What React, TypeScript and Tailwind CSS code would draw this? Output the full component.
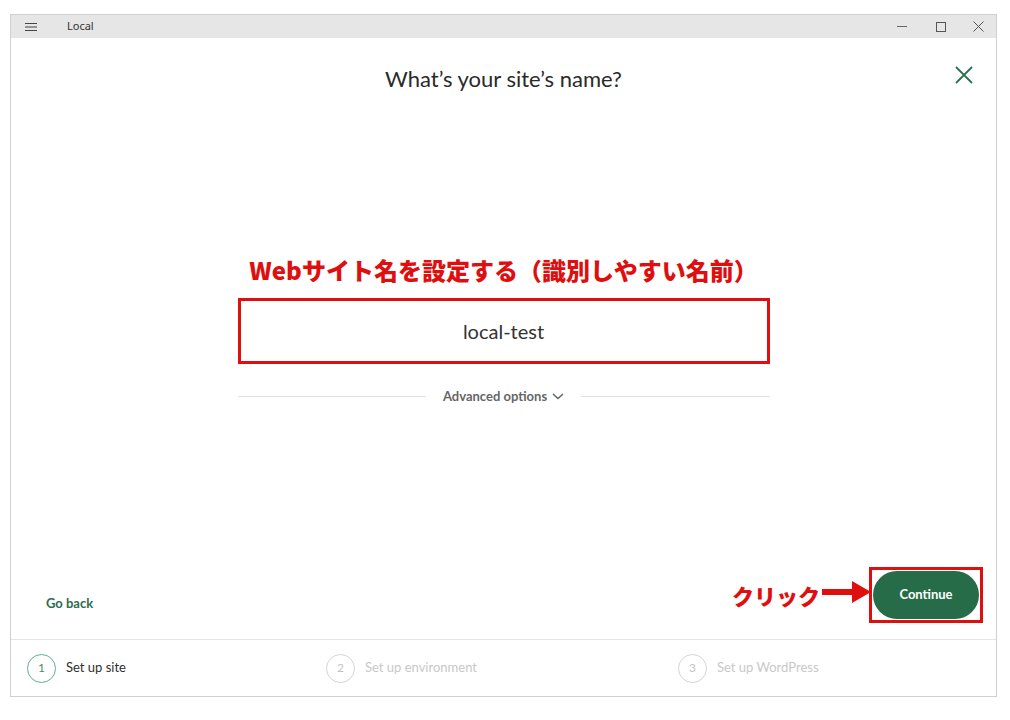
import React from "react";

const lato = { fontFamily: '"Lato", "Noto Sans", sans-serif' };

function Step({ n, label, active, width }: { n: number; label: string; active?: boolean; width: string }) {
  return (
    <div className={`flex items-center gap-[10px] ${width}`}>
      <div
        className={[
          "flex h-[29px] w-[29px] items-center justify-center rounded-full border-[1.5px] text-[12px]",
          active ? "border-[#5fae8e] text-[#4d8c72]" : "border-[#d4d4d4] text-[#c4c4c4]",
        ].join(" ")}
      >
        {n}
      </div>
      <span className={active ? "text-[13px] text-[#2f2f2f]" : "text-[13px] text-[#c8c8c8]"}>{label}</span>
    </div>
  );
}

export default function App() {
  return (
    <div className="h-[720px] w-[1010px] bg-white pl-[10px] pt-[14px]" style={lato}>
      <div className="flex h-[683px] w-[987px] flex-col border border-[#d0d0d0]">
        {/* title bar */}
        <div className="flex h-[23px] items-center bg-[#e6e6e6] text-[#333]">
          <div className="flex w-[56px] pl-[14px]">
            <svg width="12" height="10" viewBox="0 0 12 10">
              <path d="M0 1.5h12M0 5h12M0 8.5h12" stroke="#444" strokeWidth="1.2" />
            </svg>
          </div>
          <span className="text-[11px] text-[#333]" style={{ fontFamily: '"Noto Sans", sans-serif' }}>Local</span>
          <div className="ml-auto flex h-full">
            <div className="flex w-[39px] items-center justify-center">
              <div className="h-px w-[10px] bg-[#666]" />
            </div>
            <div className="flex w-[39px] items-center justify-center">
              <div className="h-[10px] w-[10px] border border-[#555]" />
            </div>
            <div className="flex w-[36px] items-center justify-center">
              <svg width="11" height="11" viewBox="0 0 11 11">
                <path d="M0.5 0.5l10 10M10.5 0.5l-10 10" stroke="#555" strokeWidth="1" />
              </svg>
            </div>
          </div>
        </div>

        {/* content */}
        <div className="relative flex flex-1 flex-col">
          <button className="absolute right-[23px] top-[28px]">
            <svg width="18" height="18" viewBox="0 0 18 18">
              <path d="M1 1l16 16M17 1L1 17" stroke="#2e7052" strokeWidth="1.8" />
            </svg>
          </button>
          <h1 className="pt-[28px] text-center text-[22px] leading-[26px] text-[#2a2a2a]">What’s your site’s name?</h1>

          <div className="mx-auto mt-[165px] flex w-[532px] flex-col items-center">
            <div
              className="text-[24px] font-black leading-[26px] text-[#e00f0f]"
              style={{ fontFamily: '"Noto Sans CJK JP", "Noto Sans", sans-serif' }}
            >
              Webサイト名を設定する（識別しやすい名前）
            </div>
            <div className="mt-[15px] flex h-[66px] w-[532px] items-center justify-center border-[3px] border-[#e00f0f] text-[20px] text-[#333]">
              local-test
            </div>
            <div className="mt-[23px] flex w-[532px] items-center">
              <div className="h-px flex-1 bg-[#e2e2e2]" />
              <div className="flex items-center gap-[5px] px-[17px] text-[13px] font-bold text-[#666]">
                Advanced options
                <svg width="12" height="7" viewBox="0 0 12 7">
                  <path d="M1 1l5 4.5L11 1" stroke="#666" strokeWidth="1.6" fill="none" />
                </svg>
              </div>
              <div className="h-px flex-1 bg-[#e2e2e2]" />
            </div>
          </div>

          <div className="mt-auto flex items-center pb-[16px] pl-[35px] pr-[13px]">
            <span className="mt-[18px] text-[13px] font-bold text-[#2e6b4f]">Go back</span>
            <div className="ml-auto flex items-center">
              <span
                className="text-[22px] font-black text-[#e00f0f]"
                style={{ fontFamily: '"Noto Sans CJK JP", "Noto Sans", sans-serif' }}
              >
                クリック
              </span>
              <svg width="50" height="26" viewBox="0 0 50 26" className="-mt-[6px] ml-[2px]">
                <path d="M0 10h30V2l19 11-19 11v-8H0z" fill="#e00f0f" />
              </svg>
              <div className="ml-[-3px] border-[3px] border-[#e00f0f] p-[1px]">
                <button className="flex h-[48px] w-[106px] items-center justify-center rounded-full bg-[#266c48] text-[13px] font-bold text-white">
                  Continue
                </button>
              </div>
            </div>
          </div>
        </div>

        {/* footer steps */}
        <div className="flex h-[57px] items-center border-t border-[#e4e4e4] pl-[16px]">
          <Step n={1} label="Set up site" active width="w-[299px]" />
          <Step n={2} label="Set up environment" width="w-[352px]" />
          <Step n={3} label="Set up WordPress" width="w-[200px]" />
        </div>
      </div>
    </div>
  );
}
